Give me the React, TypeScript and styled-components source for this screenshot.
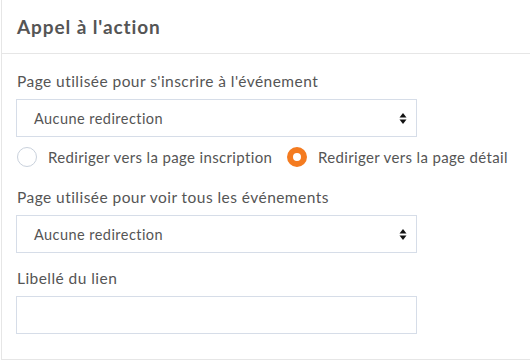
import React from 'react';
import styled, { createGlobalStyle } from 'styled-components';

const Global = createGlobalStyle`
  html, body {
    margin: 0;
    padding: 0;
    background: #fff;
    overflow: hidden;
  }
  body {
    font-family: Lato, "Open Sans", sans-serif;
    color: #555;
  }
`;

const Panel = styled.section`
  margin-left: 1px;
  width: 545px;
  border-left: 1px solid #e6e6e6;
  border-bottom: 1px solid #e6e6e6;
  background: #fff;
`;

const Header = styled.header`
  height: 53px;
  display: flex;
  align-items: center;
  padding: 0 15px;
  border-bottom: 1px solid #e6e6e6;
`;

const Title = styled.h2`
  margin: 0;
  font-size: 19px;
  letter-spacing: 0.9px;
  font-weight: 700;
  color: #555;
`;

const Body = styled.div`
  padding: 17px 14px 25px;
  display: flex;
  flex-direction: column;
`;

const Field = styled.div<{ $gap?: number }>`
  display: flex;
  flex-direction: column;
  margin-bottom: ${p => p.$gap ?? 15}px;
`;

const Label = styled.label`
  font-size: 15.5px;
  letter-spacing: 0.45px;
  line-height: 21px;
  color: #555;
  margin-bottom: 7px;
  padding-left: 1px;
`;

const SelectBox = styled.div`
  width: 401px;
  height: 38px;
  box-sizing: border-box;
  border: 1px solid #d6dde8;
  display: flex;
  align-items: center;
  justify-content: space-between;
  padding: 0 9px 0 17px;
  font-size: 14.5px;
  letter-spacing: 0.45px;
  color: #555;
  background: #fff;
`;

const TextInput = styled.input`
  width: 401px;
  height: 38px;
  box-sizing: border-box;
  border: 1px solid #d6dde8;
  outline: none;
  margin: 0;
  padding: 0 17px;
  font: inherit;
`;

const RadioRow = styled.div`
  display: flex;
  align-items: center;
  margin: 10px 0 20px;
  padding-left: 1px;
`;

const Option = styled.label<{ $width?: number }>`
  display: flex;
  align-items: center;
  gap: 11px;
  width: ${p => (p.$width ? `${p.$width}px` : 'auto')};
  font-size: 15px;
  letter-spacing: 0.35px;
  color: #555;
`;

const Dot = styled.span<{ $on?: boolean }>`
  width: 20px;
  height: 20px;
  box-sizing: border-box;
  border-radius: 50%;
  border: ${p => (p.$on ? '6px solid #f47b20' : '1px solid #c9d1dc')};
  background: #fff;
  flex: none;
`;

const Arrows = () => (
  <svg width="8" height="11" viewBox="0 0 8 11">
    <path d="M4 0 L7.5 4.5 H0.5 Z" fill="#111" />
    <path d="M4 11 L7.5 6.5 H0.5 Z" fill="#111" />
  </svg>
);

const Select = ({ value }: { value: string }) => (
  <SelectBox>
    <span>{value}</span>
    <Arrows />
  </SelectBox>
);

export default function App() {
  return (
    <>
      <Global />
      <Panel>
        <Header>
          <Title>Appel à l'action</Title>
        </Header>
        <Body>
          <Field $gap={0}>
            <Label>Page utilisée pour s'inscrire à l'événement</Label>
            <Select value="Aucune redirection" />
          </Field>
          <RadioRow>
            <Option $width={270}>
              <Dot />
              Rediriger vers la page inscription
            </Option>
            <Option>
              <Dot $on />
              Rediriger vers la page détail
            </Option>
          </RadioRow>
          <Field>
            <Label>Page utilisée pour voir tous les événements</Label>
            <Select value="Aucune redirection" />
          </Field>
          <Field $gap={0}>
            <Label>Libellé du lien</Label>
            <TextInput />
          </Field>
        </Body>
      </Panel>
    </>
  );
}
